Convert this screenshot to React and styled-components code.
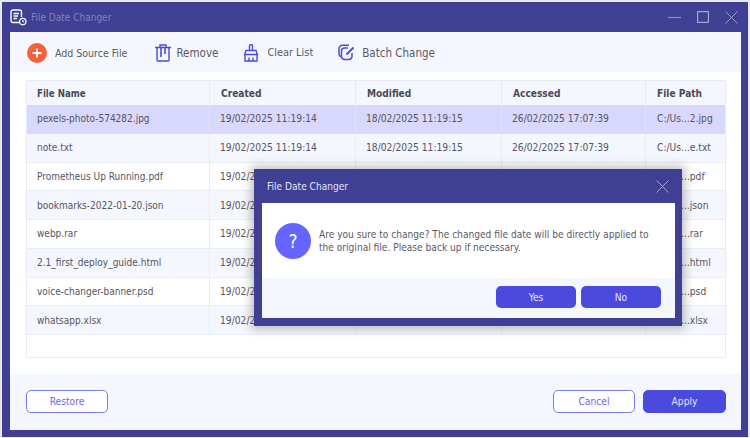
import React from "react";
import styled, { createGlobalStyle } from "styled-components";

const Global = createGlobalStyle`
  html, body { margin: 0; padding: 0; background: #e9e9e9; }
  * { box-sizing: border-box; }
  body { font-family: "DejaVu Sans", "Liberation Sans", sans-serif; font-stretch: condensed; }
`;
const Stage = styled.div`
  position: relative; width: 750px; height: 438px; padding: 2px; overflow: hidden;
`;
const Win = styled.div`
  width: 746px; height: 435px; background: #3f3f94; padding: 0 7px 7px 8px;
  display: flex; flex-direction: column;
`;
const TitleBar = styled.div`
  height: 30px; display: flex; align-items: center; gap: 4px; margin-left: -8px; padding-left: 8px; margin-right: -7px; padding-right: 9px; flex: none;
`;
const AppTitle = styled.span`
  font-size: 10px; color: #8383bd; flex: 1; padding-top: 1px;
`;
const WinCtrls = styled.div`display: flex; gap: 16px; align-items: center; margin-right: 1px;`;
const Panel = styled.div`
  flex: 1; background: #fff; display: flex; flex-direction: column; min-height: 0;
`;
const Toolbar = styled.div`
  height: 40px; background: #f4f7fd; display: flex; align-items: center; padding: 1px 0 0 17px; flex: none;
`;
const Tool = styled.div`
  display: flex; align-items: center; gap: ${p => p.$gap}px; margin-right: ${p => p.$mr}px;
  font-size: ${p => p.$fs}px; color: #5a5a66;
`;
const TableBox = styled.div`
  margin: 8px 15px 0 16px; height: 278px; border: 1px solid #e8ebf4; flex: none;
`;
const cols = "183px 146px 146px 144px 1fr";
const HeadRow = styled.div`
  display: grid; grid-template-columns: ${cols}; height: 24px; background: #f4f7fd;
`;
const HeadCell = styled.div`
  font-size: ${p => p.$first ? 9.6 : 10.1}px; font-weight: 700; color: #4a4a56; display: flex; align-items: center;
  padding-left: ${p => p.$first ? 10 : 11}px; border-right: 1px solid #e6ebf5;
  &:last-child { border-right: 0; }
`;
const Row = styled.div`
  display: grid; grid-template-columns: ${cols}; height: 28.75px;
  background: ${p => p.$sel ? "#d8d7fc" : p.$alt ? "#f4f7fd" : "#fff"};
  border-bottom: 1px solid ${p => p.$sel ? "#d8d7fc" : "#e9edf6"};
`;
const Cell = styled.div`
  font-size: ${p => p.$first ? 10 : 10.2}px; color: #55555f; display: flex; align-items: center; white-space: nowrap; overflow: hidden;
  padding-left: 10px; border-right: 1px solid ${p => p.$sel ? "#e3e3fc" : "#e9edf6"};
  &:last-child { border-right: 0; padding-left: 11px; }
`;
const Footer = styled.div`
  margin-top: 16px; flex: 1; background: #f4f7fd; display: flex; align-items: flex-start;
  padding: 16px 15px 0 16px; gap: 8px;
`;
const Spacer = styled.div`flex: 1;`;
const Btn = styled.button`
  width: ${p => p.$w}px; height: 23px; border-radius: 5px; font: inherit; font-size: 10.2px; padding: 0;
  border: 1px solid ${p => p.$solid ? "#4a4adf" : "#7a7af0"};
  background: ${p => p.$solid ? "#4a4adf" : "#fff"};
  color: ${p => p.$solid ? "#e4e4fb" : "#6a6af0"};
`;
const Dialog = styled.div`
  position: absolute; left: 254px; top: 169px; width: 428px; height: 157px; background: #3f3f94;
  padding: 0 7px 8px 8px; display: flex; flex-direction: column;
  box-shadow: 0 0 9px 3px rgba(60,60,60,.32);
`;
const DlgTitle = styled.div`
  height: 34px; display: flex; align-items: center; justify-content: space-between;
  font-size: 10.1px; color: #e2e2f3; padding: 0 7px 0 5px; margin-right: -1px; flex: none;
`;
const DlgBody = styled.div`
  flex: 1; background: #fff; display: flex; align-items: flex-start; gap: 8px; padding: 20px 12px 0 13px;
`;
const Question = styled.div`
  width: 36px; height: 36px; border-radius: 50%; background: #6464ff; color: #fff; flex: none;
  display: flex; align-items: center; justify-content: center; font-size: 19px; font-weight: 500;
`;
const DlgText = styled.p`
  margin: 0; font-size: 10.1px; line-height: 13px; color: #5a5a66; padding-top: 5px;
`;
const DlgFoot = styled.div`
  height: 40px; background: #f4f7fd; display: flex; justify-content: flex-end; align-items: center; gap: 5px; padding: 0 14px 2px 0; flex: none;
`;
const DlgBtn = styled.button`
  width: 80px; height: 22px; border-radius: 5px; border: 0; background: #4a4adf; color: #e4e4fb; font: inherit; font-size: 10.2px; padding: 0;
`;

const DocClock = () => (
  <svg width="17" height="17" viewBox="0 0 17 17" fill="none" stroke="#fff" strokeWidth="1.4">
    <path d="M9.5 13.5H3a2 2 0 0 1-2-2V3a2 2 0 0 1 2-2h6.5a2 2 0 0 1 2 2v5" />
    <path d="M3.5 4.5H9M3.5 7H8M3.5 9.5H7" />
    <circle cx="12.8" cy="12.6" r="3.2" strokeWidth="1.2" />
    <path d="M12.8 11v1.8h1.4" strokeWidth="1" />
  </svg>
);
const Minimize = () => <svg width="13" height="13" viewBox="0 0 13 13"><path d="M0 6.5h13" stroke="#8f8fc6" strokeWidth="1.2" /></svg>;
const Maximize = () => <svg width="12" height="12" viewBox="0 0 12 12"><rect x=".6" y=".6" width="10.8" height="10.8" fill="none" stroke="#a5a5d2" strokeWidth="1.2" /></svg>;
const Close = ({ c = "#9c9ccd" }) => <svg width="13" height="13" viewBox="0 0 13 13"><path d="M.5.5l12 12M12.5.5l-12 12" stroke={c} strokeWidth="1" fill="none" /></svg>;
const AddIcon = () => (
  <svg width="20" height="20" viewBox="0 0 20 20">
    <circle cx="10" cy="10" r="10" fill="#f8603c" />
    <path d="M5.5 10h9M10 5.5v9" stroke="#fff" strokeWidth="1.8" />
  </svg>
);
const Trash = () => (
  <svg width="16" height="18" viewBox="0 0 16 18" fill="none" stroke="#4a4adf" strokeWidth="1.4">
    <path d="M0 3.5h16M5 3.2V1h6v2.2" />
    <path d="M2 3.5V16a1 1 0 0 0 1 1h10a1 1 0 0 0 1-1V3.5" />
    <path d="M6 4v9M10 4v6" strokeWidth="1.6" />
  </svg>
);
const Broom = () => (
  <svg width="16" height="18" viewBox="0 0 16 18" fill="none" stroke="#4a4adf" strokeWidth="1.4">
    <path d="M6.5 6V2a1.5 1.5 0 0 1 3 0v4" />
    <path d="M3 6.5h10l1.3 4H1.7z" />
    <path d="M2 10.5V17h12v-6.5M6 17v-3.5M10 17v-3.5" />
  </svg>
);
const Batch = () => (
  <svg width="17" height="17" viewBox="0 0 17 17" fill="none" stroke="#4a4adf" strokeWidth="1.5">
    <path d="M11 1.2H4.5a3.5 3.5 0 0 0-3.5 3.5V10a3 3 0 0 0 2 2.8" />
    <path d="M10 4H6.5a3 3 0 0 0-3 3v5.5a3 3 0 0 0 3 3H11a3 3 0 0 0 3-3V9" />
    <path d="M8.5 10.5L15.5 3.5" strokeWidth="2" />
  </svg>
);

const files = [
  ["pexels-photo-574282.jpg", "19/02/2025 11:19:14", "18/02/2025 11:19:15", "26/02/2025 17:07:39", "C:/Us...2.jpg"],
  ["note.txt", "19/02/2025 11:19:14", "18/02/2025 11:19:15", "26/02/2025 17:07:39", "C:/Us...e.txt"],
  ["Prometheus Up Running.pdf", "19/02/2025 11:19:14", "18/02/2025 11:19:15", "26/02/2025 17:07:39", "C:/Us...pdf"],
  ["bookmarks-2022-01-20.json", "19/02/2025 11:19:14", "18/02/2025 11:19:15", "26/02/2025 17:07:39", "C:/Us...json"],
  ["webp.rar", "19/02/2025 11:19:14", "18/02/2025 11:19:15", "26/02/2025 17:07:39", "C:/Us...rar"],
  ["2.1_first_deploy_guide.html", "19/02/2025 11:19:14", "18/02/2025 11:19:15", "26/02/2025 17:07:39", "C:/Us...html"],
  ["voice-changer-banner.psd", "19/02/2025 11:19:14", "18/02/2025 11:19:15", "26/02/2025 17:07:39", "C:/Us...psd"],
  ["whatsapp.xlsx", "19/02/2025 11:19:14", "18/02/2025 11:19:15", "26/02/2025 17:07:39", "C:/Us...xlsx"],
];

export default function App() {
  return (
    <Stage>
      <Global />
      <Win>
        <TitleBar>
          <DocClock />
          <AppTitle>File Date Changer</AppTitle>
          <WinCtrls><Minimize /><Maximize /><Close /></WinCtrls>
        </TitleBar>
        <Panel>
          <Toolbar>
            <Tool $gap={8} $mr={28} $fs={10.5}><AddIcon />Add Source File</Tool>
            <Tool $gap={5} $mr={25} $fs={11.5}><Trash />Remove</Tool>
            <Tool $gap={8} $mr={25} $fs={10.9}><Broom />Clear List</Tool>
            <Tool $gap={7} $mr={0} $fs={11.5}><Batch />Batch Change</Tool>
          </Toolbar>
          <TableBox>
            <HeadRow>
              {["File Name", "Created", "Modified", "Accessed", "File Path"].map((h, i) => <HeadCell key={h} $first={i === 0}>{h}</HeadCell>)}
            </HeadRow>
            {files.map((f, i) => (
              <Row key={f[0]} $sel={i === 0} $alt={i % 2 === 1}>
                {f.map((c, j) => <Cell key={j} $first={j === 0} $sel={i === 0}>{c}</Cell>)}
              </Row>
            ))}
          </TableBox>
          <Footer>
            <Btn $w={82}>Restore</Btn>
            <Spacer />
            <Btn $w={82}>Cancel</Btn>
            <Btn $w={83} $solid>Apply</Btn>
          </Footer>
        </Panel>
      </Win>
      <Dialog>
        <DlgTitle>File Date Changer<Close c="#a3a3d3" /></DlgTitle>
        <DlgBody>
          <Question>?</Question>
          <DlgText>Are you sure to change? The changed file date will be directly applied to the original file. Please back up if necessary.</DlgText>
        </DlgBody>
        <DlgFoot><DlgBtn>Yes</DlgBtn><DlgBtn>No</DlgBtn></DlgFoot>
      </Dialog>
    </Stage>
  );
}
